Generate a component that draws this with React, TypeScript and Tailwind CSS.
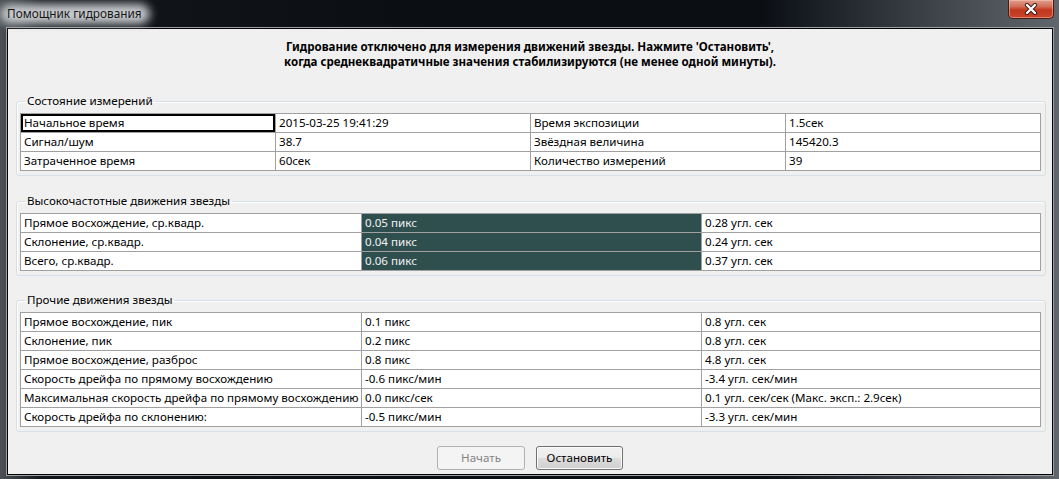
import type { ReactNode } from "react";

type Cell = { text: string; dark?: boolean; focus?: boolean };

const status: Cell[][] = [
    [{ text: "Начальное время", focus: true }, { text: "2015-03-25 19:41:29" }, { text: "Время экспозиции" }, { text: "1.5сек" }],
    [{ text: "Сигнал/шум" }, { text: "38.7" }, { text: "Звёздная величина" }, { text: "145420.3" }],
    [{ text: "Затраченное время" }, { text: "60сек" }, { text: "Количество измерений" }, { text: "39" }],
];

const highFreq: Cell[][] = [
    [{ text: "Прямое восхождение, ср.квадр." }, { text: "0.05 пикс", dark: true }, { text: "0.28 угл. сек" }],
    [{ text: "Склонение, ср.квадр." }, { text: "0.04 пикс", dark: true }, { text: "0.24 угл. сек" }],
    [{ text: "Всего, ср.квадр." }, { text: "0.06 пикс", dark: true }, { text: "0.37 угл. сек" }],
];

const other: Cell[][] = [
    [{ text: "Прямое восхождение, пик" }, { text: "0.1 пикс" }, { text: "0.8 угл. сек" }],
    [{ text: "Склонение, пик" }, { text: "0.2 пикс" }, { text: "0.8 угл. сек" }],
    [{ text: "Прямое восхождение, разброс" }, { text: "0.8 пикс" }, { text: "4.8 угл. сек" }],
    [{ text: "Скорость дрейфа по прямому восхождению" }, { text: "-0.6 пикс/мин" }, { text: "-3.4 угл. сек/мин" }],
    [{ text: "Максимальная скорость дрейфа по прямому восхождению" }, { text: "0.0 пикс/сек" }, { text: "0.1 угл. сек/сек (Макс. эксп.: 2.9сек)" }],
    [{ text: "Скорость дрейфа по склонению:" }, { text: "-0.5 пикс/мин" }, { text: "-3.3 угл. сек/мин" }],
];

function GridTable({ rows, cols }: { rows: Cell[][]; cols: string }) {
    return (
        <div className={`mt-[4px] grid w-[1021px] border-l border-t border-[#a0a0a0] bg-white ${cols}`}>
            {rows.flat().map((cell, i) => (
                <div
                    key={i}
                    className={`flex h-[19px] items-center overflow-hidden whitespace-nowrap border-b border-r border-[#a0a0a0] pl-[3px] ${
                        cell.dark ? "bg-[#2f4f4f] text-[#f2f2f2]" : "text-black"
                    } ${cell.focus ? "shadow-[inset_0_0_0_2px_#000]" : ""}`}
                >
                    {cell.text}
                </div>
            ))}
        </div>
    );
}

function GroupBox({ title, children, className }: { title: string; children: ReactNode; className: string }) {
    return (
        <fieldset
            className={`ml-[8px] w-[1030px] rounded-[3px] border border-[#d5dfe5] pb-[4px] pl-[3px] pr-[4px] shadow-[inset_1px_1px_0_#ffffff] ${className}`}
        >
            <legend className="ml-[5px] px-[2px] leading-[16px] text-black">{title}</legend>
            {children}
        </fieldset>
    );
}

export default function App() {
    return (
        <div className="relative h-[479px] w-[1059px] overflow-hidden bg-[linear-gradient(90deg,#4a5055_0%,#12161b_4%,#0b0f14_40%,#0b0f14_72%,#3d4349_88%,#60666c_100%)] font-['Noto_Sans',sans-serif] text-[11.6px]">
            {/* Title bar */}
            <div className="relative flex h-[28px] items-center pl-[7px]">
                <div className="absolute left-[0px] top-[4px] h-[20px] w-[150px] rounded-[10px] bg-[#c9cccf] blur-[5px]" />
                <span className="relative text-[11.8px] text-[#141414]">Помощник гидрования</span>
                <div className="absolute right-[5px] top-0 flex h-[19px] w-[46px] items-center justify-center rounded-b-[5px] border border-t-0 border-[#4a1c14] bg-[linear-gradient(180deg,#e0a08f_0%,#d3705a_35%,#c2381f_55%,#c8452a_100%)] shadow-[inset_0_0_0_1px_rgba(255,210,200,0.45)]">
                    <svg width="14" height="12" viewBox="0 0 14 12">
                        <path d="M3 2 L11 10 M11 2 L3 10" stroke="#3a1a14" strokeWidth="4.2" strokeLinecap="round" />
                        <path d="M3 2 L11 10 M11 2 L3 10" stroke="#ffffff" strokeWidth="2.4" strokeLinecap="round" />
                    </svg>
                </div>
            </div>

            {/* Client area */}
            <div className="ml-[7px] flex h-[447px] w-[1046px] flex-col border border-black bg-[#f0f0f0] shadow-[0_0_0_1px_#9aa0a5]">
                <div className="pt-[10px] text-center text-[11.55px] font-bold leading-[15px] text-black">
                    <p>Гидрование отключено для измерения движений звезды. Нажмите 'Остановить',</p>
                    <p>когда среднеквадратичные значения стабилизируются (не менее одной минуты).</p>
                </div>

                <GroupBox title="Состояние измерений" className="mt-[24px]">
                    <GridTable rows={status} cols="grid-cols-[255px_255px_255px_1fr]" />
                </GroupBox>

                <GroupBox title="Высокочастотные движения звезды" className="mt-[17px]">
                    <GridTable rows={highFreq} cols="grid-cols-[341px_340px_1fr]" />
                </GroupBox>

                <GroupBox title="Прочие движения звезды" className="mt-[16px]">
                    <GridTable rows={other} cols="grid-cols-[341px_340px_1fr]" />
                </GroupBox>

                <div className="mt-[14px] flex justify-center gap-[11px]">
                    <button
                        type="button"
                        disabled
                        className="h-[24px] w-[88px] rounded-[3px] border border-[#adb2b5] bg-[#f4f4f4] text-[11.6px] text-[#838383]"
                    >
                        Начать
                    </button>
                    <button
                        type="button"
                        className="h-[24px] w-[87px] rounded-[3px] border border-[#707070] bg-[linear-gradient(180deg,#f2f2f2_0%,#ebebeb_48%,#dddddd_52%,#cfcfcf_100%)] text-[11.6px] text-black shadow-[inset_0_0_0_1px_#fcfcfc]"
                    >
                        Остановить
                    </button>
                </div>
            </div>
        </div>
    );
}
